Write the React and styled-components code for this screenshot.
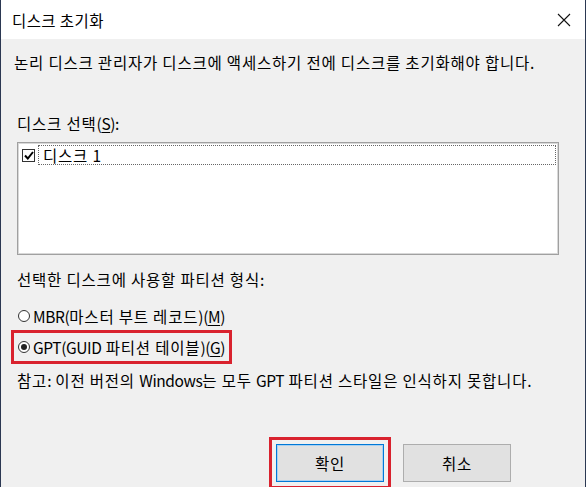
import React from "react";
import styled, { createGlobalStyle } from "styled-components";

const Global = createGlobalStyle`
  html, body { margin: 0; padding: 0; background: #f0f0f0; }
  body { font-family: "Noto Sans CJK KR", "Noto Sans", sans-serif; }
  * { box-sizing: border-box; }
`;

const Window = styled.div`
  width: 586px;
  height: 487px;
  display: flex;
  flex-direction: column;
  border-left: 1px solid #2b3852;
  border-right: 1px solid #2b3852;
  background: #f0f0f0;
  color: #000;
  font-size: 15.5px;
  letter-spacing: 0.8px;
  overflow: hidden;
`;

const TitleBar = styled.div`
  height: 39px;
  flex: none;
  background: #fff;
  display: flex;
  align-items: center;
  justify-content: space-between;
  padding: 0 14px 0 11px;
  font-size: 15.5px;
  letter-spacing: 0.4px;
`;

const CloseBtn = styled.div`
  width: 14px;
  height: 14px;
  display: flex;
`;

const Body = styled.div`
  flex: 1;
  display: flex;
  flex-direction: column;
  padding: 0 16px;
`;

const Line = styled.div`
  line-height: 20px;
  white-space: nowrap;
  margin-top: ${(p) => p.$mt || 0}px;
  margin-left: ${(p) => p.$ml || 0}px;
`;

const Latin = styled.span`
  letter-spacing: -0.4px;
`;

const ListBox = styled.div`
  margin-top: 9px;
  width: 542px;
  height: 113px;
  background: #fff;
  border: 1px solid #a0a0a0;
  box-shadow: inset 0 0 0 1px #d8d8d8;
  padding: 2px;
`;

const Item = styled.div`
  display: flex;
  align-items: center;
  gap: 3px;
  height: 20px;
`;

const CheckBox = styled.div`
  width: 13px;
  height: 13px;
  border: 1px solid #333;
  background: #fff;
  display: flex;
  align-items: center;
  justify-content: center;
  flex: none;
  margin-left: 2px;
`;

const ItemLabel = styled.div`
  flex: 1;
  height: 20px;
  border: 1px dotted #666;
  line-height: 18px;
  padding-left: 4px;
`;

const RadioRow = styled.div`
  display: flex;
  align-items: center;
  gap: 3px;
  height: 20px;
  line-height: 20px;
  white-space: nowrap;
`;

const Radio = styled.div`
  width: 12px;
  height: 12px;
  border-radius: 50%;
  border: 1px solid #333;
  background: #fff;
  display: flex;
  align-items: center;
  justify-content: center;
  flex: none;
  &::after {
    content: "";
    width: 6px;
    height: 6px;
    border-radius: 50%;
    background: ${(p) => (p.$checked ? "#222" : "transparent")};
  }
`;

const Highlight = styled.div`
  align-self: flex-start;
  border: 3px solid #d9222e;
  margin-left: ${(p) => p.$ml || 0}px;
  margin-top: ${(p) => p.$mt || 0}px;
  padding: ${(p) => p.$pad || "0"};
`;

const Buttons = styled.div`
  display: flex;
  align-items: flex-start;
  gap: 12px;
  margin-top: 47px;
  margin-left: 252px;
`;

const Button = styled.div`
  width: ${(p) => p.$w || 108}px;
  height: 38px;
  display: flex;
  align-items: center;
  justify-content: center;
  background: #e1e1e1;
  border: 1px solid ${(p) => (p.$primary ? "#0078d7" : "#adadad")};
  box-shadow: ${(p) => (p.$primary ? "inset 0 0 0 1px #a9d0f0" : "none")};
  font-size: 15.5px;
`;

const U = styled.span`
  text-decoration: underline;
  text-underline-offset: 2px;
  letter-spacing: -0.4px;
`;

export default function App() {
  return (
    <>
      <Global />
      <Window>
        <TitleBar>
          <span>디스크 초기화</span>
          <CloseBtn>
            <svg width="14" height="14" viewBox="0 0 14 14">
              <path d="M1 1 L13 13 M13 1 L1 13" stroke="#111" strokeWidth="1.1" fill="none" />
            </svg>
          </CloseBtn>
        </TitleBar>
        <Body>
          <Line $mt={13} $ml={-3}>
            논리 디스크 관리자가 디스크에 액세스하기 전에 디스크를 초기화해야 합니다.
          </Line>
          <Line $mt={41}>
            디스크 선택<Latin>(</Latin><U>S</U><Latin>):</Latin>
          </Line>
          <ListBox>
            <Item>
              <CheckBox>
                <svg width="10" height="9" viewBox="0 0 10 9">
                  <path d="M1 4.5 L3.8 7.5 L9 1" stroke="#000" strokeWidth="2" fill="none" />
                </svg>
              </CheckBox>
              <ItemLabel>디스크 <Latin>1</Latin></ItemLabel>
            </Item>
          </ListBox>
          <Line $mt={14}>선택한 디스크에 사용할 파티션 형식<Latin>:</Latin></Line>
          <RadioRow style={{ marginTop: 17, marginLeft: 1 }}>
            <Radio />
            <span>
              <Latin>MBR(</Latin>마스터 부트 레코드<Latin>)(</Latin><U>M</U><Latin>)</Latin>
            </span>
          </RadioRow>
          <Highlight $ml={-6} $mt={4} $pad="4px 4px 4px 4px">
            <RadioRow>
              <Radio $checked />
              <span>
                <Latin>GPT(GUID</Latin> 파티션 테이블<Latin>)(</Latin><U>G</U><Latin>)</Latin>
              </span>
            </RadioRow>
          </Highlight>
          <Line $mt={6}>
            참고<Latin>:</Latin> 이전 버전의 <Latin>Windows</Latin>는 모두 <Latin>GPT</Latin> 파티션 스타일은 인식하지 못합니다<Latin>.</Latin>
          </Line>
          <Buttons>
            <Highlight $pad="4px">
              <Button $primary>확인</Button>
            </Highlight>
            <Button style={{ marginTop: 7 }}>취소</Button>
          </Buttons>
        </Body>
      </Window>
    </>
  );
}
